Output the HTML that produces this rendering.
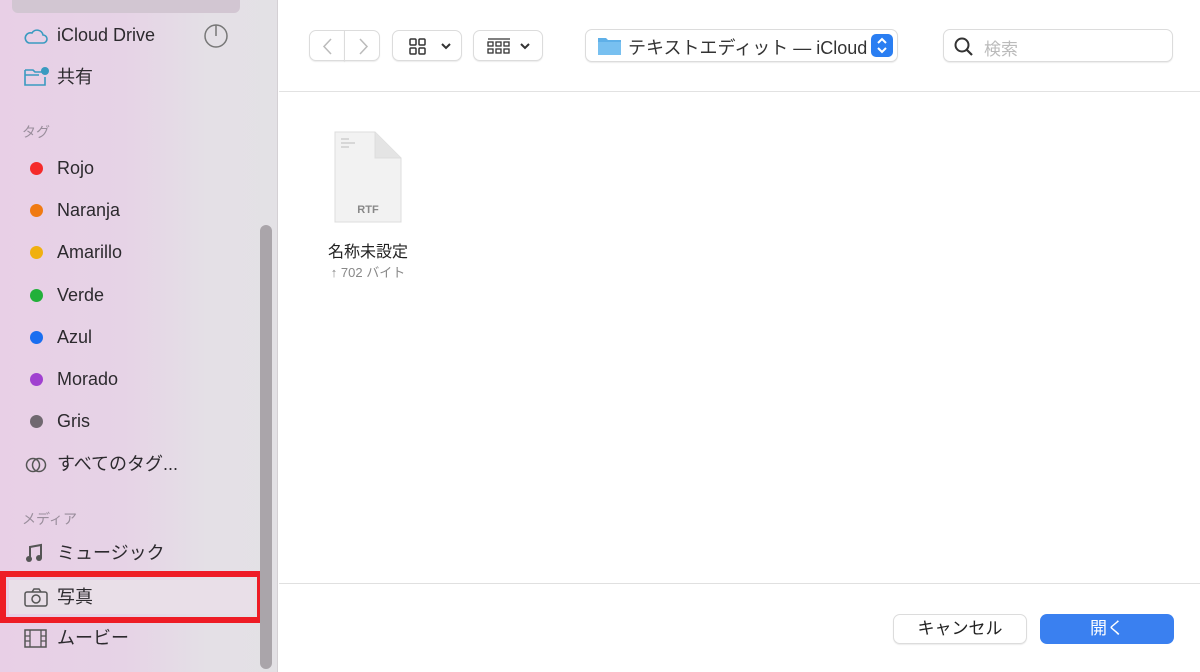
<!DOCTYPE html>
<html><head><meta charset="utf-8"><style>
*{margin:0;padding:0;box-sizing:border-box}
body{width:1200px;height:672px;overflow:hidden;font-family:"Liberation Sans","Noto Sans CJK JP",sans-serif;background:#fff;position:relative}
#sb{position:absolute;left:0;top:0;width:278px;height:672px;background:linear-gradient(90deg,#e8cfe6 0%,#e6d3e6 45%,#e4e0e6 75%,#e3e1e5 100%);border-right:1px solid #d4d0d4}
.it{position:absolute;left:57px;font-size:18px;color:#2c2a2e;line-height:22px}
.dot{position:absolute;left:30px;width:13px;height:13px;border-radius:50%}
.hd{position:absolute;left:22px;font-size:14px;color:#9a8e9c}
.btn{position:absolute;border:1px solid #dcdcdc;border-radius:7px;background:#fff;box-shadow:0 1px 1px rgba(0,0,0,.08)}
</style></head><body>
<div id="sb">
<div style="position:absolute;left:12px;top:-20px;width:228px;height:33px;background:#d2c6d2;border-radius:6px"></div>
<svg style="position:absolute;left:23px;top:26px" width="26" height="20" viewBox="0 0 26 20"><path d="M6 17h14a4 4 0 0 0 0-8 6 6 0 0 0-11-2 5 5 0 0 0-3 10z" fill="none" stroke="#3a9ac0" stroke-width="1.6"/></svg>
<div class="it" style="top:24px">iCloud Drive</div>
<svg style="position:absolute;left:203px;top:23px" width="26" height="26"><circle cx="13" cy="13" r="11" fill="none" stroke="#777" stroke-width="1.5"/><path d="M13 13V2" stroke="#777" stroke-width="1.5"/></svg>
<svg style="position:absolute;left:24px;top:66px" width="26" height="22"><path d="M1 4h8l2 2h7M1 4v15h20v-8M1 9h14" fill="none" stroke="#3a9ac0" stroke-width="1.6"/><circle cx="21" cy="5" r="4" fill="#3a9ac0"/></svg>
<div class="it" style="top:66px">共有</div>
<div class="hd" style="top:122px">タグ</div>
<div class="dot" style="top:162px;background:#f52a2a"></div><div class="it" style="top:157px">Rojo</div>
<div class="dot" style="top:204px;background:#f07a12"></div><div class="it" style="top:199px">Naranja</div>
<div class="dot" style="top:246px;background:#f0b010"></div><div class="it" style="top:241px">Amarillo</div>
<div class="dot" style="top:289px;background:#22b03a"></div><div class="it" style="top:284px">Verde</div>
<div class="dot" style="top:331px;background:#1a6ef0"></div><div class="it" style="top:326px">Azul</div>
<div class="dot" style="top:373px;background:#a040d0"></div><div class="it" style="top:368px">Morado</div>
<div class="dot" style="top:415px;background:#706870"></div><div class="it" style="top:410px">Gris</div>
<svg style="position:absolute;left:24px;top:456px" width="26" height="18"><circle cx="9" cy="9" r="6.5" fill="none" stroke="#555" stroke-width="1.5"/><circle cx="15" cy="9" r="6.5" fill="none" stroke="#555" stroke-width="1.5"/></svg>
<div class="it" style="top:453px">すべてのタグ...</div>
<div class="hd" style="top:509px">メディア</div>
<svg style="position:absolute;left:25px;top:543px" width="20" height="20"><path d="M5 17V4l11-2v13" fill="none" stroke="#555" stroke-width="2"/><circle cx="4" cy="16" r="3" fill="#555"/><circle cx="14" cy="15" r="3" fill="#555"/></svg>
<div class="it" style="top:542px">ミュージック</div>
<div style="position:absolute;left:0;top:571px;width:263px;height:52px;border:6px solid #ee1c25;"><div style="position:absolute;left:3px;top:3px;right:3px;bottom:3px;background:#e9dfe8"></div></div>
<svg style="position:absolute;left:24px;top:588px" width="26" height="20"><rect x="1" y="4" width="22" height="14" rx="2" fill="none" stroke="#555" stroke-width="1.5"/><path d="M8 4l2-3h5l2 3" fill="none" stroke="#555" stroke-width="1.5"/><circle cx="12" cy="11" r="4" fill="none" stroke="#555" stroke-width="1.5"/></svg>
<div class="it" style="top:586px">写真</div>
<svg style="position:absolute;left:24px;top:629px" width="24" height="20"><rect x="1" y="1" width="21" height="17" fill="none" stroke="#555" stroke-width="1.5"/><path d="M6 1v17M17 1v17M1 7h5M1 12h5M17 7h5M17 12h5" stroke="#555" stroke-width="1.3"/></svg>
<div class="it" style="top:627px">ムービー</div>
<div style="position:absolute;left:260px;top:225px;width:12px;height:444px;background:#aaa5aa;border-radius:6px"></div>
</div>
<div style="position:absolute;left:279px;top:0;right:0;height:92px;border-bottom:1px solid #e2e2e2"></div>
<div class="btn" style="left:309px;top:30px;width:36px;height:31px;border-radius:7px 0 0 7px"><svg width="36" height="31"><path d="M21 8l-7 7.5 7 7.5" fill="none" stroke="#bbb" stroke-width="1.5"/></svg></div>
<div class="btn" style="left:344px;top:30px;width:36px;height:31px;border-radius:0 7px 7px 0"><svg width="36" height="31"><path d="M15 8l7 7.5-7 7.5" fill="none" stroke="#bbb" stroke-width="1.5"/></svg></div>
<div class="btn" style="left:392px;top:30px;width:70px;height:31px"><svg width="70" height="31"><g fill="none" stroke="#333" stroke-width="1.5"><rect x="17" y="8" width="6" height="6" rx="1"/><rect x="26" y="8" width="6" height="6" rx="1"/><rect x="17" y="17" width="6" height="6" rx="1"/><rect x="26" y="17" width="6" height="6" rx="1"/><path d="M49 13l4 4 4-4" stroke-width="2"/></g></svg></div>
<div class="btn" style="left:473px;top:30px;width:70px;height:31px"><svg width="70" height="31"><g fill="none" stroke="#333" stroke-width="1.3"><path d="M14 8h22"/><rect x="14" y="11" width="5" height="4"/><rect x="22" y="11" width="5" height="4"/><rect x="30" y="11" width="5" height="4"/><rect x="14" y="18" width="5" height="4"/><rect x="22" y="18" width="5" height="4"/><rect x="30" y="18" width="5" height="4"/><path d="M47 13l4 4 4-4" stroke-width="2"/></g></svg></div>
<div class="btn" style="left:585px;top:29px;width:313px;height:33px"></div>
<svg style="position:absolute;left:597px;top:35px" width="26" height="21"><path d="M1 3h8l2 2h13v15H1z" fill="#5fb0e8"/><path d="M1 7h23v13H1z" fill="#78c0f0"/></svg>
<div style="position:absolute;left:628px;top:34px;font-size:18px;color:#333">テキストエディット — iCloud</div>
<div style="position:absolute;left:871px;top:34px;width:22px;height:23px;background:#2a7ef2;border-radius:5px"><svg width="22" height="23"><path d="M7 9l4-4 4 4M7 14l4 4 4-4" fill="none" stroke="#fff" stroke-width="2"/></svg></div>
<div class="btn" style="left:943px;top:29px;width:230px;height:33px"><svg style="position:absolute;left:9px;top:6px" width="22" height="22"><circle cx="9" cy="9" r="6.5" fill="none" stroke="#333" stroke-width="2"/><path d="M14 14l5 5" stroke="#333" stroke-width="2.2"/></svg><span style="position:absolute;left:40px;top:5px;font-size:17px;color:#bbb">検索</span></div>
<svg style="position:absolute;left:333px;top:131px" width="70" height="92"><path d="M2 1h40l26 26v64H2z" fill="#f2f2f2" stroke="#ddd"/><path d="M42 1v26h26" fill="#e4e4e4" stroke="#ddd"/><path d="M8 8h8M8 12h14M8 16h8" stroke="#aaa" stroke-width=".8"/><text x="35" y="82" font-size="11" fill="#888" text-anchor="middle" font-family="Liberation Sans" font-weight="bold">RTF</text></svg>
<div style="position:absolute;left:318px;top:238px;width:100px;text-align:center;font-size:16px;color:#222">名称未設定</div>
<div style="position:absolute;left:318px;top:262px;width:100px;text-align:center;font-size:13px;color:#888">↑ 702 バイト</div>
<div style="position:absolute;left:279px;top:583px;right:0;border-top:1px solid #e0e0e0"></div>
<div class="btn" style="left:893px;top:614px;width:134px;height:30px;text-align:center;font-size:17px;line-height:28px;color:#222">キャンセル</div>
<div style="position:absolute;left:1040px;top:614px;width:134px;height:30px;background:#3a80f0;border-radius:7px;text-align:center;font-size:17px;line-height:30px;color:#fff">開く</div>
</body></html>
